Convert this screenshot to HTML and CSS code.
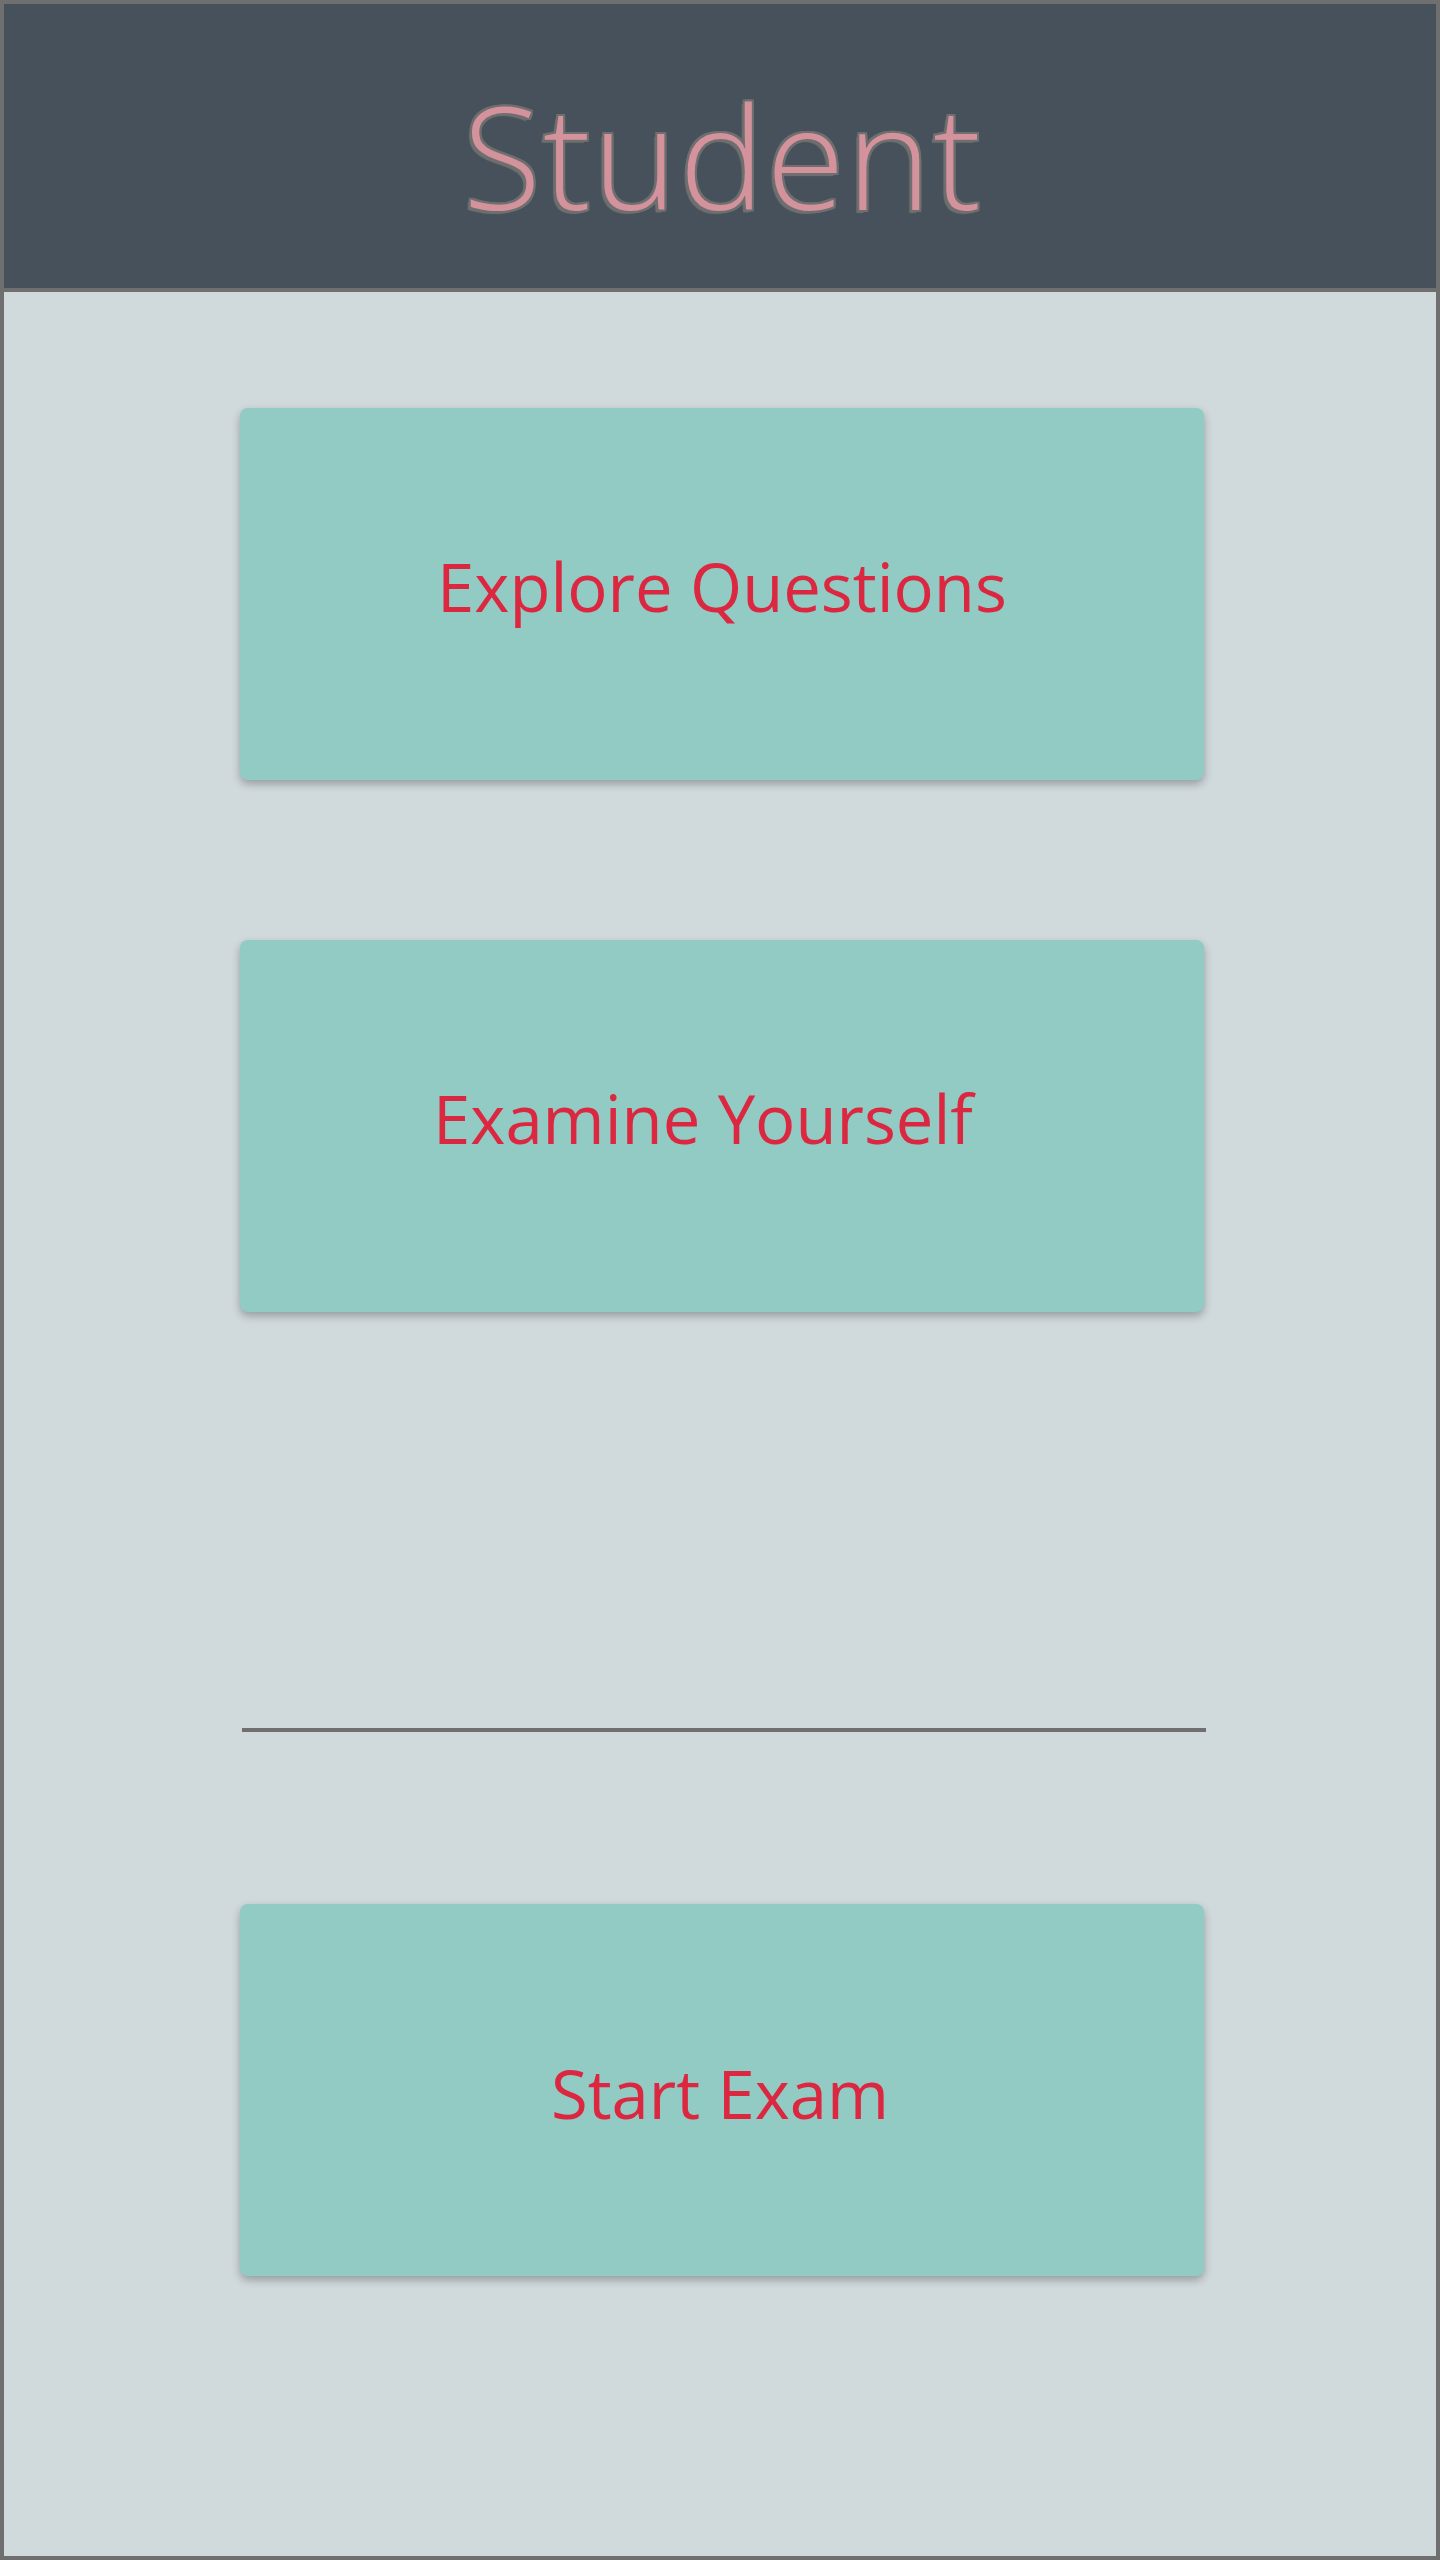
FILE: index.html
```html
<!DOCTYPE html>
<html lang="en">
<head>
<meta charset="utf-8">
<title>Student</title>
<link rel="stylesheet" href="styles.css">
</head>
<body>
<div class="page">
  <header class="header">
    <h1 class="title">Student</h1>
  </header>
  <main class="content">
    <div class="menu">
      <button class="tile">Explore Questions</button>
      <button class="tile tile-second">Examine Yourself</button>
    </div>
    <hr class="divider">
    <button class="tile tile-exam">Start Exam</button>
  </main>
</div>
</body>
</html>
```

FILE: styles.css
```css
* { box-sizing: border-box; }
html, body { margin: 0; padding: 0; }
body {
  font-family: "Open Sans", "Noto Sans", "Liberation Sans", sans-serif;
  background: #d0d9dc;
}
.page {
  width: 1440px;
  height: 2560px;
  border: 4px solid #6f6f6f;
  background: #d0d9dc;
  display: flex;
  flex-direction: column;
}
.header {
  height: 288px;
  flex: 0 0 auto;
  background: #47515b;
  border-bottom: 4px solid #6f6f6f;
  display: flex;
  align-items: center;
  justify-content: center;
}
.title {
  margin: 0;
  font-weight: 300;
  font-size: 143px;
  line-height: 1;
  color: #d4939c;
  padding-top: 16px;
  padding-left: 6px;
  letter-spacing: 2px;
  text-shadow:
    -2px 0 0 #6f6f6f, 2px 0 0 #6f6f6f,
    0 -2px 0 #6f6f6f, 0 2px 0 #6f6f6f,
    -2px -2px 0 #6f6f6f, 2px 2px 0 #6f6f6f,
    -2px 2px 0 #6f6f6f, 2px -2px 0 #6f6f6f,
    -3px 3px 1px #6f6f6f;
}
.content {
  padding: 116px 232px 0 236px;
  display: flex;
  flex-direction: column;
}
.menu {
  display: flex;
  flex-direction: column;
  gap: 160px;
}
.tile {
  width: 964px;
  height: 372px;
  border: none;
  border-radius: 8px;
  background: #92cac4;
  box-shadow: 0 4px 8px rgba(0, 0, 0, 0.28);
  color: #dc2740;
  font-family: "Open Sans", "Noto Sans", "Liberation Sans", sans-serif;
  font-size: 67px;
  font-weight: 400;
  letter-spacing: 0;
  padding: 0 0 16px;
  cursor: pointer;
}
.tile-second {
  padding-right: 38px;
}
.divider {
  width: 964px;
  height: 4px;
  margin: 416px 0 0 2px;
  border: none;
  background: #6f6f6f;
}
.tile-exam {
  margin-top: 172px;
  padding: 6px 4px 0 0;
}
```
